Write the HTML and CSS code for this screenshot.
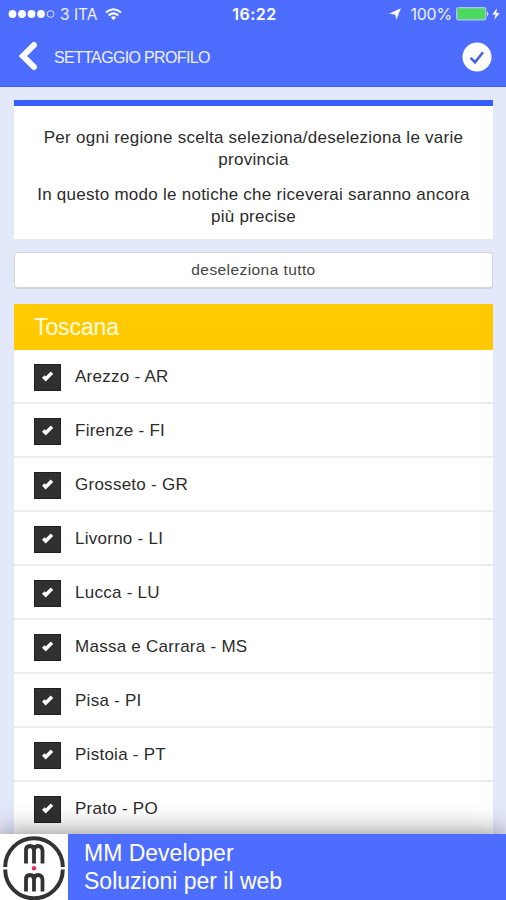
FILE: index.html
```html
<!DOCTYPE html>
<html lang="it">
<head>
<meta charset="utf-8">
<title>Settaggio profilo</title>
<link rel="stylesheet" href="styles.css">
</head>
<body>
<div class="app">
  <header class="top">
    <div class="status">
      <div class="status-left">
        <svg class="signal" width="47" height="10" viewBox="0 0 47 10" fill="#fff"><circle cx="4.5" cy="5" r="3.9"/><circle cx="14" cy="5" r="3.9"/><circle cx="23.5" cy="5" r="3.9"/><circle cx="33" cy="5" r="3.9"/><circle cx="42.5" cy="5" r="3.4" fill="none" stroke="#dce2ff"/></svg>
        <span class="carrier">3 ITA</span>
        <svg class="wifi" width="17" height="13" viewBox="0 0 17 13" fill="none" stroke="#fff" stroke-width="2"><path d="M1 4.6Q8.5-2 16 4.6M3.7 7.5Q8.5 3.2 13.3 7.5"/><path d="M5.8 9.3Q8.5 7 11.2 9.3L8.5 12.2Z" fill="#fff" stroke="none"/></svg>
      </div>
      <span class="clock">16:22</span>
      <div class="status-right">
        <svg class="arrow" width="12" height="12" viewBox="0 0 12 12" fill="#fff"><path d="M11.9.3 7.3 11.8 6.2 6.6.1 5.7Z"/></svg>
        <span class="percent">100%</span>
        <svg class="battery" width="34" height="14" viewBox="0 0 34 14"><rect x=".7" y=".7" width="29" height="12.2" rx="2" fill="#4cd95f" stroke="#b5c1f5" stroke-width="1.3"/><path d="M31 4.5Q34 7 31 9.5Z" fill="#dce2ff"/></svg>
        <svg class="bolt" width="8" height="12" viewBox="0 0 8 12" fill="#fff"><path d="M5 .2.3 6.6H3.5L2.4 11.8 7.6 5H4.3Z"/></svg>
      </div>
    </div>
    <div class="nav">
      <svg class="back" width="20" height="30" viewBox="0 0 20 30" fill="none" stroke="#fff" stroke-width="6" stroke-linecap="round"><path d="M16 4 5 15 16 26"/></svg>
      <h1 class="title">SETTAGGIO PROFILO</h1>
      <svg class="confirm" width="30" height="30" viewBox="0 0 30 30"><circle cx="15" cy="15" r="14.5" fill="#fff"/><path d="M8.7 15.8 13 20.2 21 10.2" fill="none" stroke="#4262dc" stroke-width="2.6"/></svg>
    </div>
  </header>
  <main class="content">
    <section class="intro">
      <p>Per ogni regione scelta seleziona/deseleziona le varie<br>provincia</p>
      <p>In questo modo le notiche che riceverai saranno ancora<br>più precise</p>
    </section>
    <button class="clear">deseleziona tutto</button>
    <section class="region">
      <h2 class="region-name">Toscana</h2>
      <ul class="list">
        <li><i class="box"><svg width="12" height="11" viewBox="0 0 12 11"><path d="M1.3 5.6 3.7 8 10 1.8" /></svg></i><span>Arezzo - AR</span></li>
        <li><i class="box"><svg width="12" height="11" viewBox="0 0 12 11"><path d="M1.3 5.6 3.7 8 10 1.8" /></svg></i><span>Firenze - FI</span></li>
        <li><i class="box"><svg width="12" height="11" viewBox="0 0 12 11"><path d="M1.3 5.6 3.7 8 10 1.8" /></svg></i><span>Grosseto - GR</span></li>
        <li><i class="box"><svg width="12" height="11" viewBox="0 0 12 11"><path d="M1.3 5.6 3.7 8 10 1.8" /></svg></i><span>Livorno - LI</span></li>
        <li><i class="box"><svg width="12" height="11" viewBox="0 0 12 11"><path d="M1.3 5.6 3.7 8 10 1.8" /></svg></i><span>Lucca - LU</span></li>
        <li><i class="box"><svg width="12" height="11" viewBox="0 0 12 11"><path d="M1.3 5.6 3.7 8 10 1.8" /></svg></i><span>Massa e Carrara - MS</span></li>
        <li><i class="box"><svg width="12" height="11" viewBox="0 0 12 11"><path d="M1.3 5.6 3.7 8 10 1.8" /></svg></i><span>Pisa - PI</span></li>
        <li><i class="box"><svg width="12" height="11" viewBox="0 0 12 11"><path d="M1.3 5.6 3.7 8 10 1.8" /></svg></i><span>Pistoia - PT</span></li>
        <li><i class="box"><svg width="12" height="11" viewBox="0 0 12 11"><path d="M1.3 5.6 3.7 8 10 1.8" /></svg></i><span>Prato - PO</span></li>
      </ul>
    </section>
  </main>
  <footer class="banner">
    <div class="logo">
      <svg width="68" height="66" viewBox="0 0 68 66" fill="none" stroke="#333" stroke-width="4"><path d="M5.2 33A28.8 28.8 0 0 1 62.8 33M62.8 35.5A28.8 28.8 0 0 1 5.2 35.5"/><g stroke-width="3.8"><path d="M26 29.5V16.5Q26 12 30 12T34 16.5V29.5M34 16.5Q34 12 38 12T42.500 16.5V29.5M26 57.5V45.5Q26 41 30 41T34 45.5V57.5M34 45.5Q34 41 38 41T42.500 45.5V57.5"/></g><circle cx="34" cy="34.3" r="2.2" fill="#e52b59" stroke="none"/></svg>
    </div>
    <div class="banner-text"><div class="maker">MM Developer</div><div class="tagline">Soluzioni per il web</div></div>
  </footer>
</div>
</body>
</html>
```
FILE: styles.css
```css
* { box-sizing: border-box; }
body { margin: 0; font-family: "Liberation Sans", sans-serif; color: #2c2c2c; }
h1, h2, p, ul { margin: 0; padding: 0; font-weight: 400; }
svg { display: block; flex: none; }
span { white-space: nowrap; }
.app { height: 900px; display: flex; flex-direction: column; overflow: hidden; background: #e4e8fb; }
.top { height: 87px; flex: none; background: #4d6dff; border-bottom: 1px solid #405fe8; color: #eef1ff; }
.status { height: 28px; display: grid; grid-template-columns: 1fr auto 1fr; align-items: center; padding: 0 6px 0 8px; font: 16px/28px Inter, sans-serif; }
.status-left, .status-right { display: flex; align-items: center; }
.status-right { justify-content: flex-end; }
.carrier { margin-left: 5px; padding-top: 2px; line-height: 26px; width: 39px; font-size: 15.5px; }
.wifi { margin-left: 6px; }
.clock { margin-left: 1px; font-weight: 600; letter-spacing: .5px; color: #fff; }
.percent { margin: 0 4px 0 9px; letter-spacing: -.2px; }
.bolt { margin-left: 2px; }
.nav { height: 58px; display: flex; align-items: center; padding: 0 14px 0 18px; }
.back { margin-top: -2px; }
.title { flex: 1; margin-left: 16px; padding-top: 2px; font-size: 16px; letter-spacing: -.65px; }
.content { flex: 1; min-height: 0; overflow: hidden; padding: 13px 13px 0 14px; }
.intro { height: 140px; background: #fff; border-top: 6px solid #375cff; border-bottom: 1px solid #e8e8ed; padding-top: 21px; text-align: center; font-size: 17px; line-height: 22px; letter-spacing: .26px; }
.intro p + p { margin-top: 13px; }
.clear { display: block; width: 100%; height: 37px; margin: 12px 0 15px; padding: 0; border: 1px solid #d4d4d8; border-bottom-width: 2px; border-radius: 4px; background: #fff; color: #444; font: 15.5px "Liberation Sans", sans-serif; letter-spacing: .42px; }
.region-name { height: 46px; background: #ffca00; color: #fffbe0; padding-left: 20px; font-size: 23px; line-height: 46px; letter-spacing: -.1px; }
.list { list-style: none; background: #fff; }
.list li { height: 54px; display: flex; align-items: flex-start; padding-left: 20px; border-bottom: 2px solid #ececec; font-size: 17px; line-height: 22px; letter-spacing: .26px; }
.list span { margin: 16px 0 0 14px; }
.box { display: flex; justify-content: center; width: 27px; height: 27px; margin-top: 14px; padding-top: 6px; background: #303030; border: 1px solid #202020; }
.box path { fill: none; stroke: #fff; stroke-width: 3.5; }
.banner { position: relative; height: 66px; flex: none; display: flex; background: #4d6dff; color: #fff; font-size: 23px; line-height: 28px; box-shadow: 0 0 28px rgba(0, 0, 0, .5); }
.logo { width: 68px; background: #fff; }
.banner-text { padding: 5px 0 0 16px; }
```
